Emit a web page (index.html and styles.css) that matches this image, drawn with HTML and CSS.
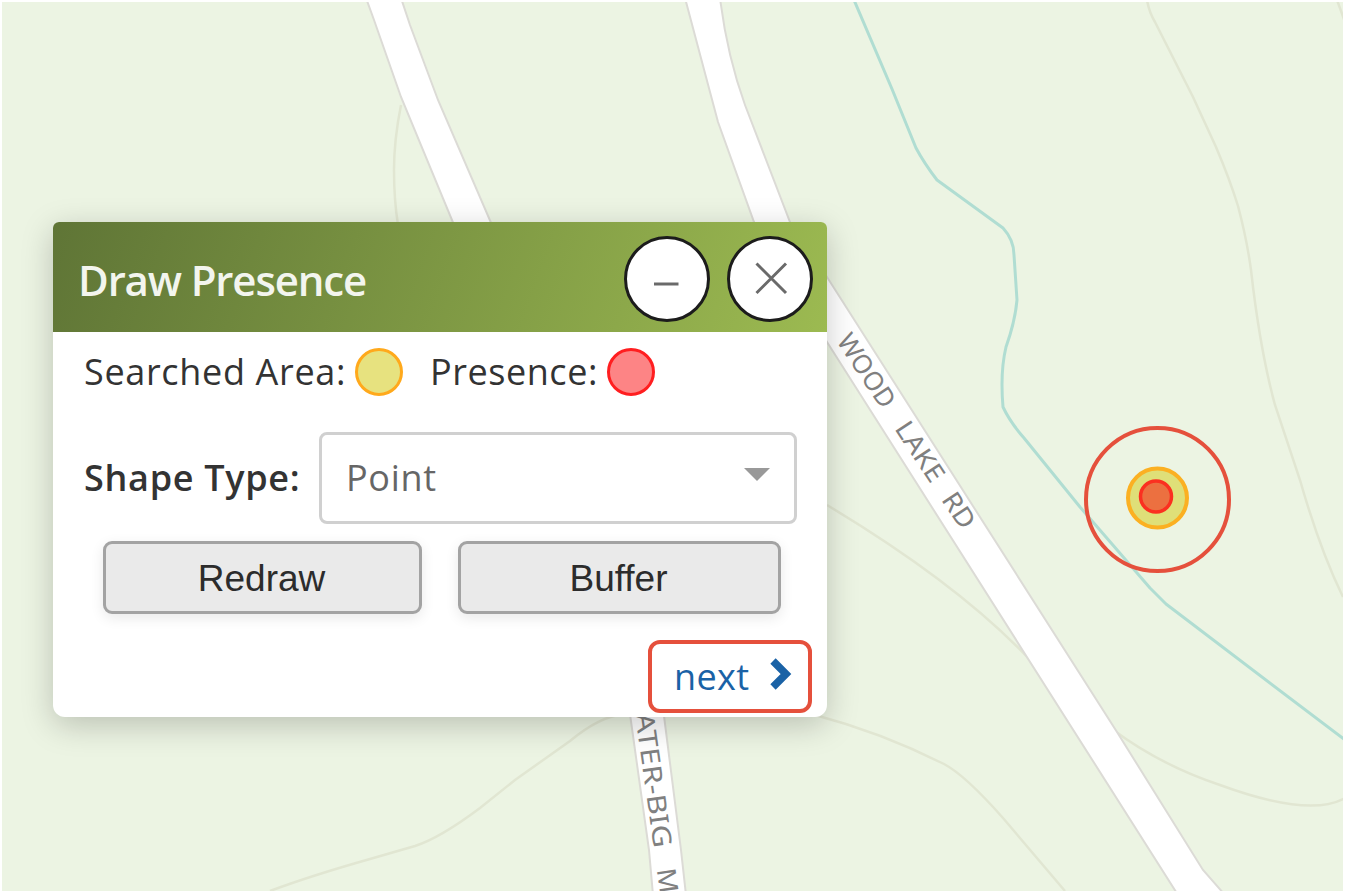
FILE: index.html
```html
<!DOCTYPE html>
<html lang="en">
<head>
<meta charset="utf-8">
<title>Draw Presence</title>
<link rel="stylesheet" href="styles.css">
</head>
<body>
<main class="map">
  <svg class="map-canvas" viewBox="0 0 1341 889" aria-hidden="true">
    <g transform="translate(-2 -2)">
      <g class="contour">
        <path d="M401 105Q394 140 394 170T398 225"/>
        <path d="M1147 0Q1149 12 1155 22L1193 97L1216 147Q1230 180 1238 206Q1247 240 1251 270Q1260 350 1275 405L1300 480Q1320 550 1343 597"/>
        <path d="M1337 0L1345 22"/>
        <path d="M827 505Q960 585 1030 660"/>
        <path d="M1112 729Q1160 765 1220 785Q1310 818 1345 798"/>
        <path d="M270 891Q310 876 370 859L415 846Q440 838 480 808L515 780L570 741Q600 716 625 714"/>
        <path d="M815 715Q880 732 944 764Q965 775 1003 818L1065 891"/>
      </g>
      <path class="stream" d="M854 0L892 89L916 148Q924 163 937 180L1003 228Q1014 240 1014 255L1017 300Q1015 322 1006 347Q1000 372 1003 407Q1010 422 1024 438L1080 507L1150 588L1166 604L1345 740"/>
      <path class="road" d="M366 -2L374 20L401 97L454 225H492L438 100L410 25L401 -2Z"/>
      <path class="road" d="M685 -2L710 92L718 122L754 222L790 285L827 342L1178 895H1225L1203 870L1117 732L827 277L790 222L745 105Q727 55 720 -2Z"/>
      <path class="road" d="M628 700L649 850L653 895H686L681 850L662 700Z"/>
      <g class="road-label">
        <g transform="translate(836 341) rotate(56.5)">
          <text x="0" y="0" textLength="83" lengthAdjust="spacingAndGlyphs">WOOD</text>
          <text x="105" y="0" textLength="67" lengthAdjust="spacingAndGlyphs">LAKE</text>
          <text x="190" y="0" textLength="38" lengthAdjust="spacingAndGlyphs">RD</text>
        </g>
        <g transform="translate(635 714) rotate(82)">
          <text x="0" y="0" textLength="136" lengthAdjust="spacingAndGlyphs">ATER-BIG</text>
          <text x="157" y="0" textLength="25" lengthAdjust="spacingAndGlyphs">M</text>
        </g>
      </g>
      <circle class="area-dot" cx="1157.500" cy="498" r="29.500"/>
      <circle class="presence-dot" cx="1156" cy="496.500" r="15.500"/>
      <circle class="callout" cx="1157.500" cy="499.500" r="71.500"/>
    </g>
  </svg>

  <section class="dialog">
    <header class="dialog-header">
      <h1 class="dialog-title">Draw Presence</h1>
      <button class="round-button" aria-label="Minimize">
        <svg viewBox="0 0 80 80"><path d="M27 45H51.500"/></svg>
      </button>
      <button class="round-button" aria-label="Close">
        <svg viewBox="0 0 80 80"><path d="M26.500 24.500L56 54M56 24.500L26.500 54"/></svg>
      </button>
    </header>
    <div class="legend">
      <span class="legend-area">Searched Area:</span>
      <span class="swatch swatch-area"></span>
      <span class="legend-presence">Presence:</span>
      <span class="swatch swatch-presence"></span>
    </div>
    <div class="field">
      <span class="field-label">Shape Type:</span>
      <div class="select">
        <span class="select-value">Point</span>
        <svg class="caret" viewBox="0 0 26 13"><path d="M0 0H26L13 13Z"/></svg>
      </div>
    </div>
    <div class="actions">
      <button class="action action-redraw">Redraw</button>
      <button class="action action-buffer">Buffer</button>
    </div>
    <footer class="dialog-footer">
      <a class="next">
        <span class="next-text">next</span>
        <svg class="chevron" viewBox="0 0 24 34"><path d="M4 4L17 17L4 30"/></svg>
      </a>
    </footer>
  </section>
</main>
</body>
</html>
```
FILE: styles.css
```css
* {
  box-sizing: border-box;
}

body {
  margin: 0;
  padding: 2px;
  height: 893px;
  overflow: hidden;
  background: #fff;
  font-family: "Open Sans", "Noto Sans", sans-serif;
}

.map {
  position: relative;
  width: 1341px;
  height: 889px;
  overflow: hidden;
  background: #ecf4e3;
}

.map-canvas {
  display: block;
  width: 1341px;
  height: 889px;
}

.contour {
  fill: none;
  stroke: #e1e6d2;
  stroke-width: 2.5;
}

.stream {
  fill: none;
  stroke: #b0ddd2;
  stroke-width: 3;
  stroke-linejoin: round;
}

.road {
  fill: #fff;
  stroke: #dcdbd6;
  stroke-width: 2;
}

.road-label {
  fill: #808080;
  font-family: "Noto Sans", sans-serif;
  font-size: 26px;
}

.area-dot {
  fill: #dfdf78;
  stroke: #fbb022;
  stroke-width: 4;
}

.presence-dot {
  fill: #ec7040;
  stroke: #fb3020;
  stroke-width: 3.5;
}

.callout {
  fill: none;
  stroke: #e5503c;
  stroke-width: 4;
}

/* Floating window over the map */
.dialog {
  position: absolute;
  left: 51px;
  top: 220px;
  width: 774px;
  height: 495px;
  border-radius: 6px 6px 12px 12px;
  background: #fff;
  box-shadow: 0 8px 32px rgba(0, 0, 0, .21);
  color: #333;
  font-size: 36px;
  line-height: 48px;
  white-space: nowrap;
}

.dialog-header {
  display: flex;
  align-items: center;
  gap: 17px;
  height: 110px;
  padding: 4px 14px 0 25px;
  border-radius: 6px 6px 0 0;
  background: linear-gradient(110deg, #5f7536 0%, #9cba51 100%);
}

.dialog-title {
  flex: 1;
  margin: 0;
  padding-top: 2px;
  color: #f3f5ee;
  font-size: 42px;
  font-weight: 600;
  line-height: 58px;
  letter-spacing: -1.15px;
}

.round-button {
  width: 86px;
  height: 86px;
  padding: 0;
  border: 3px solid #1c1c1c;
  border-radius: 50%;
  background: #fff;
}

.round-button svg {
  display: block;
  width: 80px;
  height: 80px;
  fill: none;
  stroke: #6a6a6a;
  stroke-width: 3;
}

.legend {
  display: flex;
  align-items: center;
  height: 80px;
  padding-left: 31px;
}

.legend-area {
  width: 271px;
  letter-spacing: .67px;
}

.legend-presence {
  width: 177px;
  margin-left: 27px;
  letter-spacing: .55px;
}

.swatch {
  width: 48px;
  height: 48px;
  border: 3px solid;
  border-radius: 50%;
}

.swatch-area {
  border-color: #ffa91c;
  background: #e7e27f;
}

.swatch-presence {
  border-color: #ff1e20;
  background: #fd8485;
}

.field {
  display: flex;
  align-items: center;
  height: 92px;
  margin-top: 20px;
  padding-left: 31px;
}

.field-label {
  width: 235px;
  font-weight: 600;
  letter-spacing: .7px;
}

.select {
  display: flex;
  align-items: center;
  justify-content: space-between;
  width: 478px;
  height: 92px;
  padding: 0 24px;
  border: 3px solid #d0d0d0;
  border-radius: 8px;
  color: #666;
}

.select-value {
  letter-spacing: .7px;
}

.caret {
  width: 26px;
  height: 13px;
  margin-top: -8px;
  fill: #999;
}

.actions {
  display: flex;
  gap: 36px;
  margin: 17px 0 0 50px;
}

.action {
  height: 73px;
  padding: 3px 2px 0 0;
  border: 3px solid #a3a3a3;
  border-radius: 9px;
  background: #eaeaea;
  box-shadow: 0 4px 14px rgba(0, 0, 0, .09);
  color: #2c2c2c;
  font: 37px "Liberation Sans", Arial, sans-serif;
}

.action-redraw {
  width: 319px;
}

.action-buffer {
  width: 323px;
}

.dialog-footer {
  display: flex;
  justify-content: flex-end;
  margin-top: 26px;
  padding-right: 15px;
}

.next {
  display: flex;
  align-items: center;
  width: 164px;
  height: 73px;
  padding-left: 22px;
  border: 4px solid #e5503c;
  border-radius: 12px;
  color: #1a62a6;
}

.next-text {
  width: 95px;
  letter-spacing: .4px;
}

.chevron {
  width: 24px;
  height: 34px;
  margin-top: -5px;
  fill: none;
  stroke: #1a62a6;
  stroke-width: 7.5;
}
```
